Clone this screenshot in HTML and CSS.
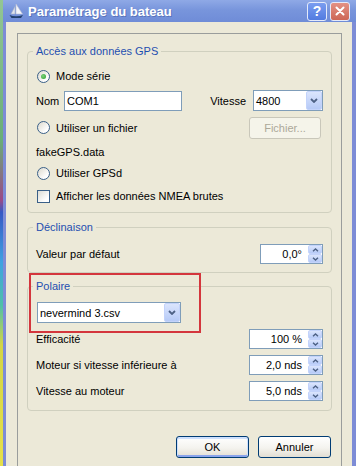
FILE: index.html
```html
<!DOCTYPE html>
<html lang="fr">
<head>
  <meta charset="UTF-8" />
  <title>Paramétrage du bateau</title>
  <link rel="stylesheet" href="styles.css">
</head>
<body>
<div class="screen">
  <div class="desk"></div>
  <div class="win">

    <div class="titlebar">
      <svg class="app-icon" viewBox="0 0 16 16">
        <path d="M8 1 L8 11 L14.5 11 Z" fill="#f4f6fb" stroke="#b8c0d4" stroke-width="0.6"/>
        <path d="M7 3.5 L7 11 L3 11 Z" fill="#dfe4ee" stroke="#aab3c8" stroke-width="0.6"/>
        <path d="M1.5 12 Q8 14.5 15 12 L13 15 L3.5 15 Z" fill="#23416e"/>
      </svg>
      <span class="title">Paramétrage du bateau</span>
      <span class="cap-btn help">?</span>
      <span class="cap-btn close">
        <svg width="10" height="10" viewBox="0 0 10 10"><path d="M1.5 1.5 L8.5 8.5 M8.5 1.5 L1.5 8.5" stroke="#fff" stroke-width="2" stroke-linecap="round"/></svg>
      </span>
    </div>

    <div class="client">
      <div class="frame">

        <fieldset class="group gps">
          <legend>Accès aux données GPS</legend>
          <div class="row h24"><span class="radio checked"></span><span>Mode série</span></div>
          <div class="row h25 spread">
            <div class="pair"><span class="lbl-nom">Nom</span><span class="edit w-com">COM1</span></div>
            <div class="pair"><span class="lbl-vit">Vitesse</span>
              <span class="combo w-vit"><span class="val">4800</span><span class="drop"><svg width="8" height="5" viewBox="0 0 8 5"><path d="M1 1 L4 4 L7 1" fill="none" stroke="#4d6185" stroke-width="1.8"/></svg></span></span>
            </div>
          </div>
          <div class="row h29 spread">
            <div class="pair"><span class="radio"></span><span>Utiliser un fichier</span></div>
            <button class="btn-off">Fichier...</button>
          </div>
          <div class="row h20">fakeGPS.data</div>
          <div class="row h22"><span class="radio"></span><span>Utiliser GPSd</span></div>
          <div class="row h24"><span class="check"></span><span>Afficher les données NMEA brutes</span></div>
        </fieldset>

        <fieldset class="group decl">
          <legend>Déclinaison</legend>
          <div class="row h20 spread">
            <span>Valeur par défaut</span>
            <span class="spin w-decl"><span class="val">0,0°</span>
              <span class="arrows">
                <span class="arr"><svg width="7" height="4" viewBox="0 0 7 4"><path d="M1 3.3 L3.5 1 L6 3.3" fill="none" stroke="#4d6185" stroke-width="1.4"/></svg></span>
                <span class="arr"><svg width="7" height="4" viewBox="0 0 7 4"><path d="M1 0.7 L3.5 3 L6 0.7" fill="none" stroke="#4d6185" stroke-width="1.4"/></svg></span>
              </span>
            </span>
          </div>
        </fieldset>

        <fieldset class="group polaire">
          <legend>Polaire</legend>
          <span class="combo w-pol"><span class="val">nevermind 3.csv</span><span class="drop"><svg width="8" height="5" viewBox="0 0 8 5"><path d="M1 1 L4 4 L7 1" fill="none" stroke="#4d6185" stroke-width="1.8"/></svg></span></span>
          <div class="rows">
            <div class="row h26 spread">
              <span>Efficacité</span>
              <span class="spin w-num"><span class="val">100 %</span>
                <span class="arrows">
                  <span class="arr"><svg width="7" height="4" viewBox="0 0 7 4"><path d="M1 3.3 L3.5 1 L6 3.3" fill="none" stroke="#4d6185" stroke-width="1.4"/></svg></span>
                  <span class="arr"><svg width="7" height="4" viewBox="0 0 7 4"><path d="M1 0.7 L3.5 3 L6 0.7" fill="none" stroke="#4d6185" stroke-width="1.4"/></svg></span>
                </span>
              </span>
            </div>
            <div class="row h26 spread">
              <span>Moteur si vitesse inférieure à</span>
              <span class="spin w-num"><span class="val">2,0 nds</span>
                <span class="arrows">
                  <span class="arr"><svg width="7" height="4" viewBox="0 0 7 4"><path d="M1 3.3 L3.5 1 L6 3.3" fill="none" stroke="#4d6185" stroke-width="1.4"/></svg></span>
                  <span class="arr"><svg width="7" height="4" viewBox="0 0 7 4"><path d="M1 0.7 L3.5 3 L6 0.7" fill="none" stroke="#4d6185" stroke-width="1.4"/></svg></span>
                </span>
              </span>
            </div>
            <div class="row h26 spread">
              <span>Vitesse au moteur</span>
              <span class="spin w-num"><span class="val">5,0 nds</span>
                <span class="arrows">
                  <span class="arr"><svg width="7" height="4" viewBox="0 0 7 4"><path d="M1 3.3 L3.5 1 L6 3.3" fill="none" stroke="#4d6185" stroke-width="1.4"/></svg></span>
                  <span class="arr"><svg width="7" height="4" viewBox="0 0 7 4"><path d="M1 0.7 L3.5 3 L6 0.7" fill="none" stroke="#4d6185" stroke-width="1.4"/></svg></span>
                </span>
              </span>
            </div>
          </div>
        </fieldset>

        <div class="buttons">
          <button class="btn default">OK</button>
          <button class="btn">Annuler</button>
        </div>

        <!-- red annotation drawn over the screenshot -->
        <div class="mark"></div>
      </div>
    </div>

  </div>
</div>
</body>
</html>
```

FILE: styles.css
```css
* {
  box-sizing: border-box;
}

body {
  margin: 0;
  width: 356px;
  height: 466px;
  overflow: hidden;
  font-family: "Liberation Sans", Arial, sans-serif;
  font-size: 11px;
  color: #000;
  background: #ece9d8;
}

.screen {
  display: flex;
  height: 466px;
}

.desk {
  width: 3px;
  flex: none;
  background: linear-gradient(#93c694 0, #6aae78 140px, #9a4a86 200px, #3658c4 212px, #3fa2e2 262px, #4fc0a8 305px, #d3d544 345px, #e6e04a 466px);
}

.win {
  flex: 1;
  min-width: 0;
  display: flex;
  flex-direction: column;
}

/* title bar */
.titlebar {
  height: 22px;
  flex: none;
  display: flex;
  align-items: center;
  padding: 0 6px 0 5px;
  background: linear-gradient(#8fa9e6, #7895dc 45%, #6f8cd7);
  color: #fff;
}

.app-icon {
  width: 16px;
  height: 16px;
  margin-right: 4px;
}

.title {
  flex: 1;
  font-size: 13px;
  font-weight: bold;
  text-shadow: 1px 1px 0 rgba(40, 60, 130, 0.35);
}

.cap-btn {
  width: 20px;
  height: 19px;
  margin-left: 3px;
  border: 1px solid #e4eafa;
  border-radius: 3px;
  display: flex;
  align-items: center;
  justify-content: center;
}

.help {
  background: linear-gradient(#7a9df0, #527be0);
  font-size: 14px;
  font-weight: bold;
}

.close {
  background: linear-gradient(#e39184, #cd6655);
}

/* dialog body */
.client {
  flex: 1;
  background: #ece9d8;
  border-left: 3px solid #7d8cd6;
  border-right: 4px solid #7d8cd6;
  padding: 11px 10px 0 11px;
  overflow: hidden;
}

.frame {
  position: relative;
  border: 1px solid #9a9d9c;
  padding: 11px 9px 40px;
}

.group {
  margin: 0;
  padding: 0 8px;
  min-width: 0;
  border: 1px solid #d0d0bf;
  border-radius: 4px;
}

.group legend {
  color: #1f4fb0;
  line-height: 13px;
  padding: 0 3px;
  margin-left: -3px;
}

.gps {
  padding-top: 6px;
  padding-bottom: 4px;
}

.decl {
  margin-top: 8px;
  padding-top: 10px;
  padding-bottom: 8px;
}

.polaire {
  margin-top: 7px;
  padding-top: 9px;
  padding-bottom: 6px;
}

.rows {
  margin-top: 3px;
}

.row {
  display: flex;
  align-items: center;
}

.spread {
  justify-content: space-between;
}

.pair {
  display: flex;
  align-items: center;
}

.h20 { height: 20px; }
.h22 { height: 22px; }
.h24 { height: 24px; }
.h25 { height: 25px; }
.h26 { height: 26px; }
.h29 { height: 29px; }

/* controls */
.radio {
  width: 13px;
  height: 13px;
  margin: 0 6px 0 1px;
  border: 1px solid #3a6088;
  border-radius: 50%;
  background: linear-gradient(135deg, #dcd9cd, #ffffff 75%);
  display: flex;
  align-items: center;
  justify-content: center;
}

.radio.checked::after {
  content: "";
  width: 5px;
  height: 5px;
  border-radius: 50%;
  background: radial-gradient(circle at 40% 40%, #7fd07f, #27a027);
}

.check {
  width: 13px;
  height: 13px;
  margin: 0 6px 0 1px;
  border: 1px solid #3a6088;
  background: linear-gradient(135deg, #dcdcd4, #ffffff 75%);
}

.lbl-nom {
  width: 28px;
}

.lbl-vit {
  margin-right: 7px;
}

.edit {
  height: 20px;
  border: 1px solid #7f9db9;
  background: #fff;
  padding-left: 2px;
  display: flex;
  align-items: center;
}

.w-com { width: 118px; }

.combo {
  height: 21px;
  border: 1px solid #7f9db9;
  background: #fff;
  display: flex;
  align-items: center;
}

.combo .val {
  flex: 1;
  padding-left: 2px;
}

.drop {
  width: 16px;
  align-self: stretch;
  border: 1px solid #c3d3fb;
  border-radius: 2px;
  background: linear-gradient(#dbe5fd, #b6caf7);
  display: flex;
  align-items: center;
  justify-content: center;
}

.w-vit { width: 70px; }

.w-pol {
  width: 144px;
  margin-left: 1px;
}

.btn-off {
  width: 72px;
  height: 22px;
  margin-right: 2px;
  border: 1px solid #c9c7ba;
  border-radius: 3px;
  background: #f5f4ea;
  color: #aca899;
  font-family: inherit;
  font-size: 11px;
  padding: 0;
}

.spin {
  height: 20px;
  border: 1px solid #7f9db9;
  background: #fff;
  display: flex;
}

.spin .val {
  flex: 1;
  align-self: center;
  text-align: right;
  padding-right: 6px;
}

.arrows {
  width: 14px;
  display: flex;
  flex-direction: column;
}

.arr {
  flex: 1;
  border: 1px solid #c3d3fb;
  border-radius: 2px;
  background: linear-gradient(#dbe5fd, #b6caf7);
  display: flex;
  align-items: center;
  justify-content: center;
}

.w-decl { width: 63px; }
.w-num { width: 74px; }

/* dialog buttons */
.buttons {
  display: flex;
  justify-content: flex-end;
  gap: 9px;
  margin-top: 25px;
  padding-right: 1px;
}

.btn {
  width: 73px;
  height: 22px;
  padding: 0;
  border: 1px solid #003c74;
  border-radius: 3px;
  background: linear-gradient(#ffffff, #f4f3ee 55%, #e2ded3);
  font-family: inherit;
  font-size: 11px;
  color: #000;
}

.btn.default {
  box-shadow: inset 0 1px 0 1px #cee0fd, inset 0 -1px 0 1px #8aa4ec;
}

.mark {
  position: absolute;
  left: 11px;
  top: 239px;
  width: 172px;
  height: 60px;
  border: 2px solid #d4363d;
}
```
